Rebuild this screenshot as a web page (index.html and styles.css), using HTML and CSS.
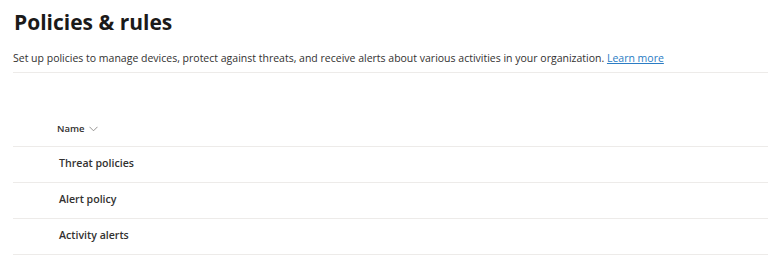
FILE: index.html
```html
<!DOCTYPE html>
<html lang="en">
<head>
    <meta charset="UTF-8">
    <meta name="viewport" content="width=device-width, initial-scale=1.0">
    <title>Policies &amp; rules</title>
    <link rel="stylesheet" href="styles.css">
</head>
<body>
    <div class="page">
        <h1 class="page-title">Policies &amp; rules</h1>
        <p class="page-desc">
            Set up policies to manage devices, protect against threats, and receive alerts about various activities in your organization.
            <a href="#" class="learn-more">Learn more</a>
        </p>

        <div class="policy-list">
            <div class="list-header">
                <span class="col-name">Name</span>
                <svg class="sort-icon" width="9" height="6" viewBox="0 0 9 6">
                    <path d="M0.5 0.8 L4.5 4.8 L8.5 0.8" fill="none" stroke="#8a8886" stroke-width="0.9"/>
                </svg>
            </div>
            <div class="list-row">Threat policies</div>
            <div class="list-row">Alert policy</div>
            <div class="list-row">Activity alerts</div>
        </div>
    </div>
</body>
</html>
```

FILE: styles.css
```css
body {
    margin: 0;
    padding: 0;
    background-color: #fff;
    font-family: 'Open Sans', 'Noto Sans', sans-serif;
    color: #323130;
    overflow: hidden;
}

.page {
    padding: 8px 0 0 13px;
}

.page-title {
    margin: 0;
    font-size: 21px;
    line-height: 28px;
    font-weight: 700;
    color: #1b1a19;
    padding-left: 1px;
}

.page-desc {
    margin: 14px 0 0 0;
    font-size: 10.5px;
    line-height: 16px;
    padding-bottom: 6px;
    border-bottom: 1px solid #edebe9;
}

.learn-more {
    color: #2b7cc4;
    text-decoration: underline;
}

.policy-list {
    margin-top: 38px;
}

.list-header {
    display: flex;
    align-items: center;
    gap: 4px;
    height: 35px;
    padding-left: 44px;
    border-bottom: 1px solid #edebe9;
    font-size: 9.5px;
}

.col-name {
    font-weight: 600;
    color: #323130;
}

.list-row {
    display: flex;
    align-items: center;
    height: 35px;
    padding-left: 46px;
    padding-bottom: 3px;
    box-sizing: border-box;
    height: 36px;
    border-bottom: 1px solid #edebe9;
    font-size: 10.6px;
    font-weight: 600;
    color: #323130;
}
```
